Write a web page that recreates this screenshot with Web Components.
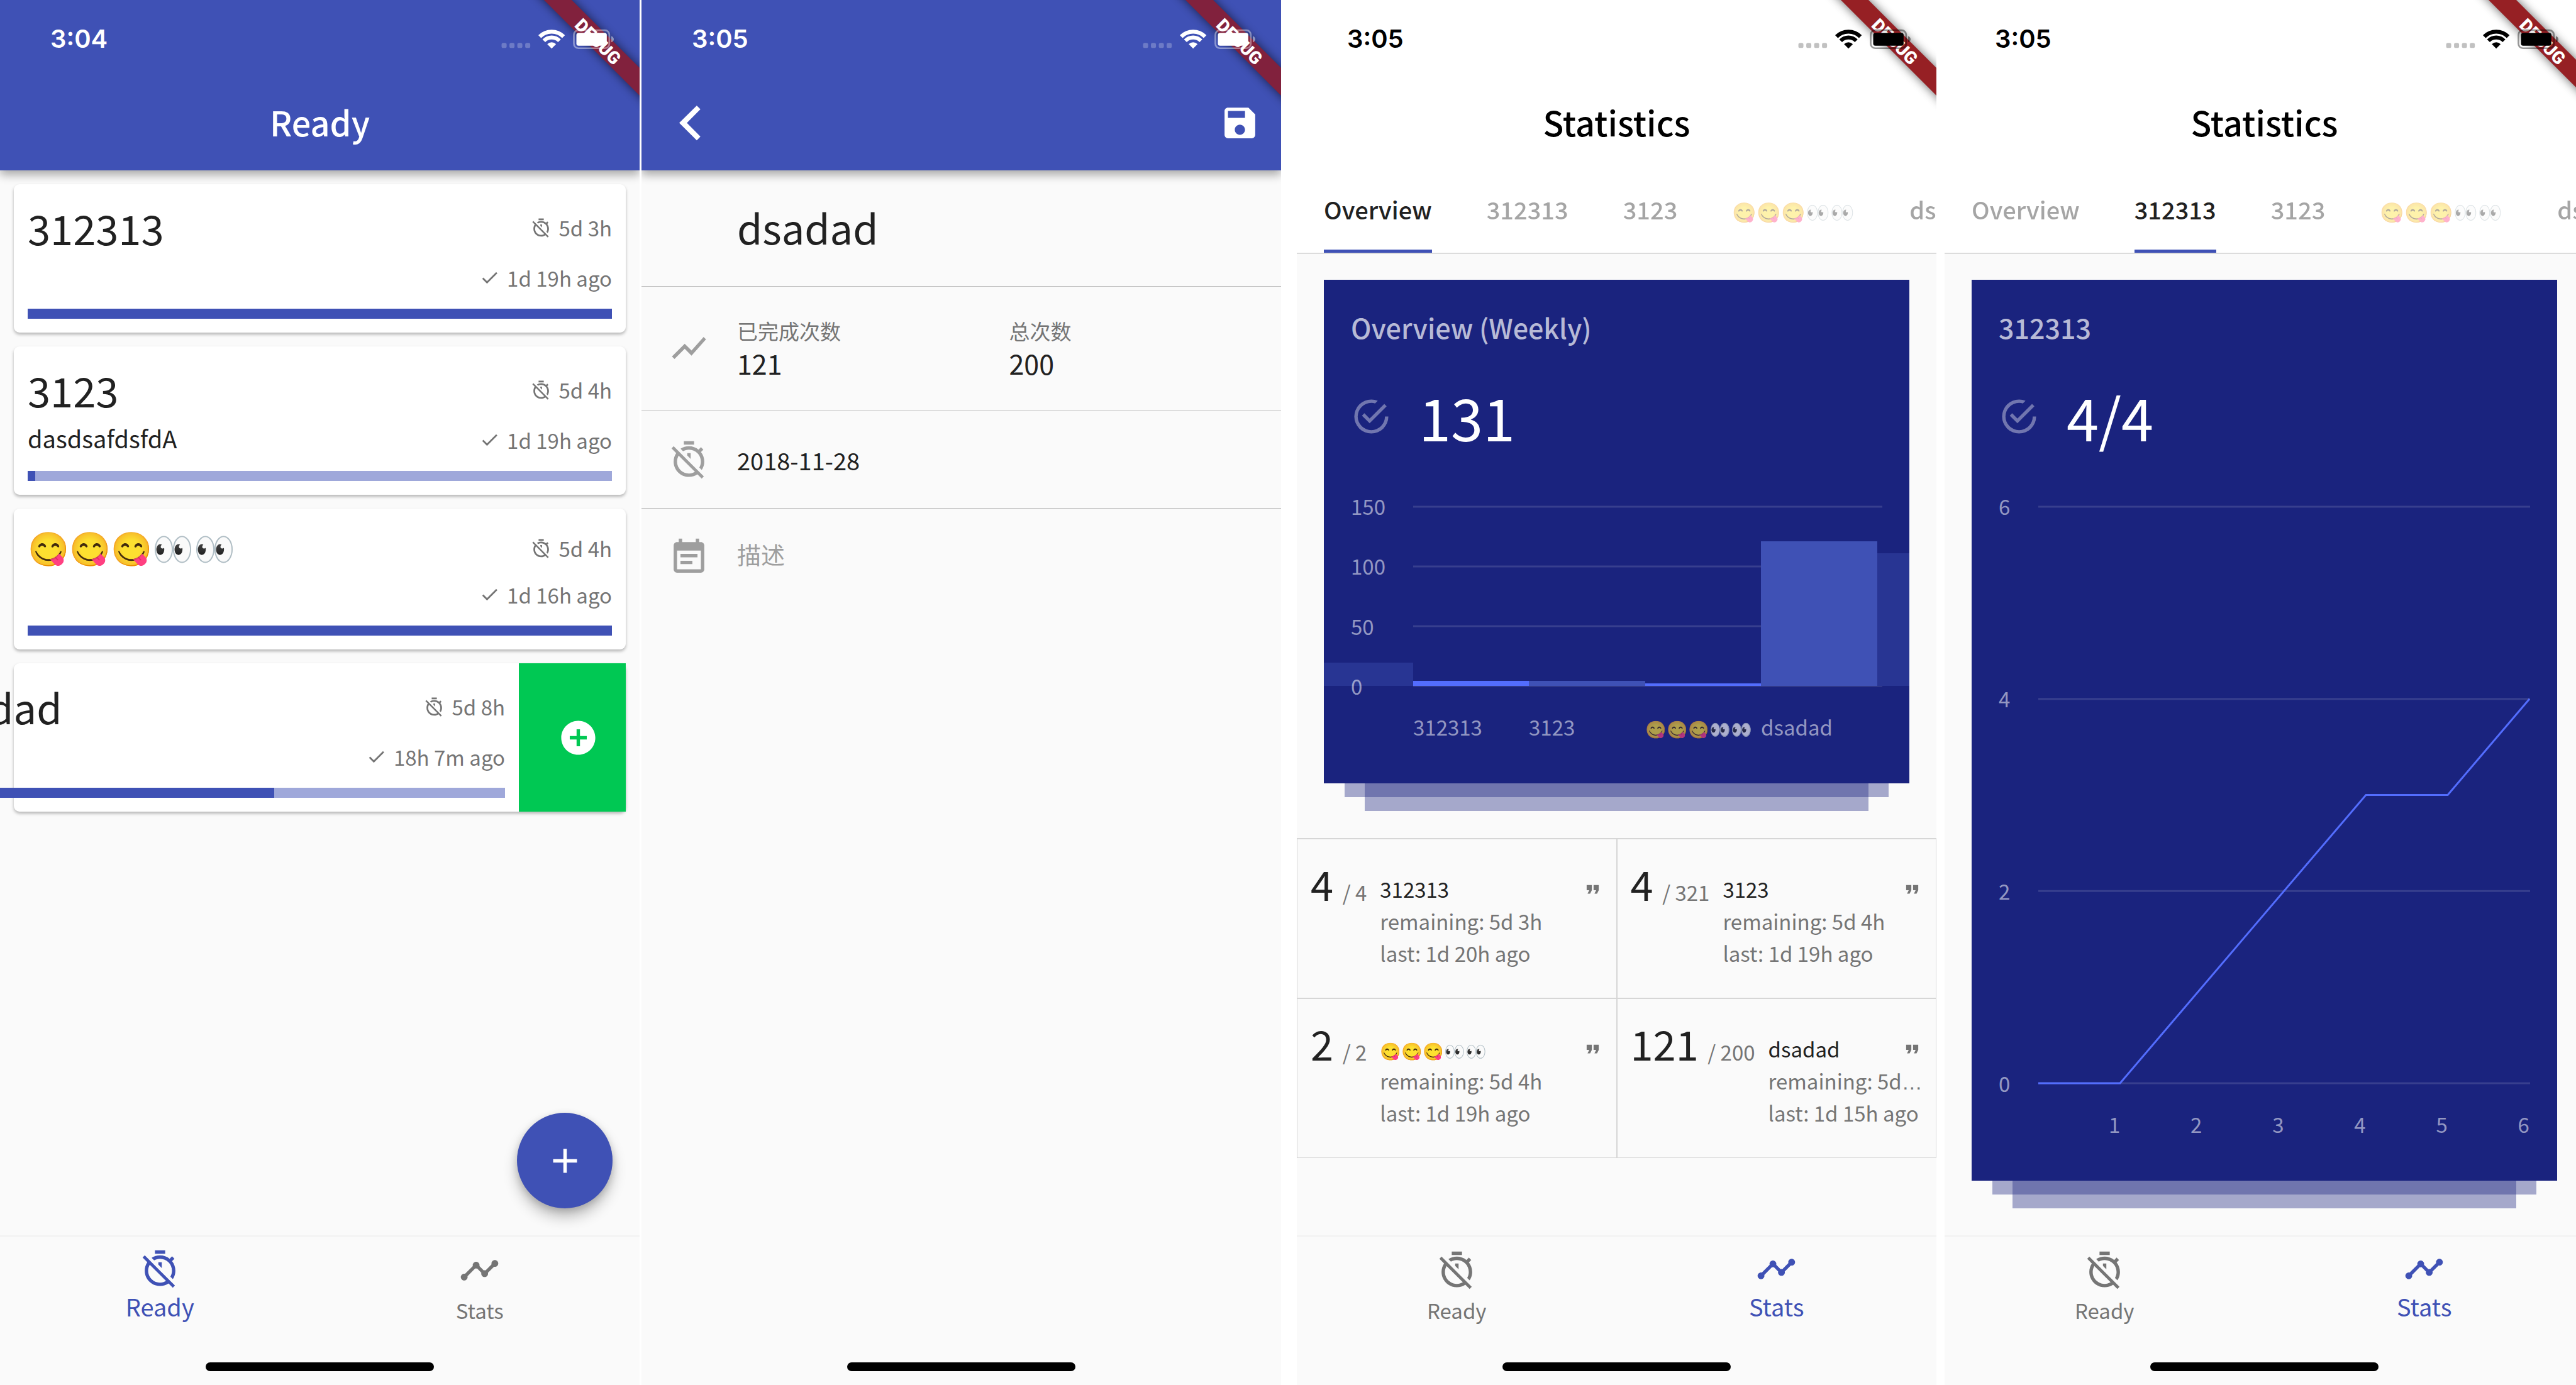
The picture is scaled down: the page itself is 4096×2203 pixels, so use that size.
<!DOCTYPE html>
<html lang="en">
<head>
<meta charset="utf-8">
<title>Counters</title>
<style>
  html, body { margin: 0; height: 100%; }
  body { background: #fff; font-family: "Noto Sans CJK SC", "Noto Sans", sans-serif; color: #212121; }
  screen-board { min-height: 100vh; }
</style>
</head>
<body>
<screen-board>
  <phone-screen>
    <app-bar slot="bar" time="3:04" tone="primary"><h1>Ready</h1></app-bar>
    <counter-list>
      <counter-card left="5d 3h" done="1d 19h ago" value="100">312313</counter-card>
      <counter-card left="5d 4h" done="1d 19h ago" value="1.3" note="dasdsafdsfdA">3123</counter-card>
      <counter-card left="5d 4h" done="1d 16h ago" value="100" short><emoji-run size="53">😋😋😋👀👀</emoji-run></counter-card>
      <counter-card left="5d 8h" done="18h 7m ago" value="60.5" swiped>dsadad</counter-card>
    </counter-list>
    <fab-button></fab-button>
    <bottom-nav slot="nav" active="ready"></bottom-nav>
    <home-indicator slot="home"></home-indicator>
  </phone-screen>

  <phone-screen>
    <app-bar slot="bar" time="3:05" tone="primary" actions></app-bar>
    <counter-form></counter-form>
    <home-indicator slot="home"></home-indicator>
  </phone-screen>

  <phone-screen>
    <app-bar slot="bar" time="3:05" tone="plain"><h1>Statistics</h1></app-bar>
    <tab-strip slot="bar" active="0"></tab-strip>
    <chart-card heading="Overview (Weekly)" total="131" kind="bars"></chart-card>
    <stat-grid>
      <stat-cell count="4" of="4" remaining="5d 3h" last="1d 20h ago">312313</stat-cell>
      <stat-cell count="4" of="321" remaining="5d 4h" last="1d 19h ago">3123</stat-cell>
      <stat-cell count="2" of="2" remaining="5d 4h" last="1d 19h ago"><emoji-run size="27">😋😋😋👀👀</emoji-run></stat-cell>
      <stat-cell count="121" of="200" remaining="5d" last="1d 15h ago" cut>dsadad</stat-cell>
    </stat-grid>
    <bottom-nav slot="nav" active="stats"></bottom-nav>
    <home-indicator slot="home"></home-indicator>
  </phone-screen>

  <phone-screen>
    <app-bar slot="bar" time="3:05" tone="plain"><h1>Statistics</h1></app-bar>
    <tab-strip slot="bar" active="1"></tab-strip>
    <chart-card heading="312313" total="4/4" kind="line"></chart-card>
    <bottom-nav slot="nav" active="stats"></bottom-nav>
    <home-indicator slot="home"></home-indicator>
  </phone-screen>
</screen-board>

<script>
const RESET = `
  *, *::before, *::after { box-sizing: border-box; }
  :host { box-sizing: border-box; display: block; }
  button, input, textarea { font: inherit; color: inherit; background: none; border: 0; padding: 0; margin: 0; outline: 0; min-width: 0; }
  input::placeholder, textarea::placeholder { color: #9e9e9e; opacity: 1; }
  a { color: inherit; text-decoration: none; }
  svg { display: block; }
`;
const define = (name, view) => customElements.define(name, class extends HTMLElement {
  connectedCallback() {
    if (this.shadowRoot) return;
    const t = document.createElement('template');
    const { css, html } = view(this);
    t.innerHTML = `<style>${RESET}${css}</style>${html}`;
    this.attachShadow({ mode: 'open' }).append(t.content.cloneNode(true));
  }
});

const ICONS = {
  timerOff: 'M19.04 4.55l-1.42 1.42C16.07 4.74 14.12 4 12 4c-1.83 0-3.53.55-4.95 1.48l1.46 1.46C9.53 6.35 10.73 6 12 6c3.87 0 7 3.13 7 7 0 1.27-.35 2.47-.94 3.49l1.45 1.45C20.45 16.53 21 14.83 21 13c0-2.12-.74-4.07-1.97-5.61l1.42-1.42-1.41-1.42zM15 1H9v2h6V1zm-4 8.44l2 2V8h-2v1.44zM3.02 4L1.75 5.27 4.5 8.03C3.55 9.45 3 11.16 3 13c0 4.97 4.02 9 9 9 1.84 0 3.55-.55 4.98-1.5l2.5 2.5 1.27-1.27-7.71-7.71L3.02 4zM12 20c-3.87 0-7-3.13-7-7 0-1.28.35-2.48.95-3.52l9.56 9.56c-1.03.61-2.23.96-3.51.96z',
  check: 'M9 16.17L4.83 12l-1.42 1.41L9 19 21 7l-1.41-1.41z',
  add: 'M19 13h-6v6h-2v-6H5v-2h6V5h2v6h6v2z',
  addCircle: 'M12 2C6.48 2 2 6.48 2 12s4.48 10 10 10 10-4.48 10-10S17.52 2 12 2zm5 11h-4v4h-2v-4H7v-2h4V7h2v4h4v2z',
  timeline: 'M23 8c0 1.1-.9 2-2 2-.18 0-.35-.02-.51-.07l-3.56 3.55c.05.16.07.34.07.52 0 1.1-.9 2-2 2s-2-.9-2-2c0-.18.02-.36.07-.52l-2.55-2.55c-.16.05-.34.07-.52.07s-.36-.02-.52-.07l-4.55 4.56c.05.16.07.33.07.51 0 1.1-.9 2-2 2s-2-.9-2-2 .9-2 2-2c.18 0 .35.02.51.07l4.56-4.55C8.02 9.36 8 9.18 8 9c0-1.1.9-2 2-2s2 .9 2 2c0 .18-.02.36-.07.52l2.55 2.55c.16-.05.34-.07.52-.07s.36.02.52.07l3.55-3.56C19.02 8.35 19 8.18 19 8c0-1.1.9-2 2-2s2 .9 2 2z',
  back: 'M10.3 1.8L12.45 4 4.5 12l7.95 8-2.15 2.2L0 12z',
  save: 'M17 3H5c-1.11 0-2 .9-2 2v14c0 1.1.89 2 2 2h14c1.1 0 2-.9 2-2V7l-4-4zm-5 16c-1.66 0-3-1.34-3-3s1.34-3 3-3 3 1.34 3 3-1.34 3-3 3zm3-10H5V5h10v4z',
  showChart: 'M3.5 18.49l6-6.01 4 4L22 6.92l-1.41-1.41-7.09 7.97-4-4L2 16.99z',
  eventNote: 'M17 10H7v2h10v-2zm2-7h-1V1h-2v2H8V1H6v2H5c-1.11 0-1.99.9-1.99 2L3 19c0 1.1.89 2 2 2h14c1.1 0 2-.9 2-2V5c0-1.1-.9-2-2-2zm0 16H5V8h14v11zm-5-5H7v2h7v-2z',
  checkRing: 'M20,12A8,8 0 0,1 12,20A8,8 0 0,1 4,12A8,8 0 0,1 12,4C12.76,4 13.5,4.11 14.2,4.31L15.77,2.74C14.61,2.26 13.34,2 12,2A10,10 0 0,0 2,12A10,10 0 0,0 12,22A10,10 0 0,0 22,12M7.91,10.08L6.5,11.5L11,16L21,6L19.59,4.58L11,13.17L7.91,10.08Z',
  quote: 'M6 17h3l2-4V7H5v6h3zm8 0h3l2-4V7h-6v6h3z'
};
define('md-icon', el => ({
  css: `:host { flex: none; width: 65px; height: 65px; } :host([small]) { width: 33px; height: 33px; } svg { width: 100%; height: 100%; fill: currentColor; }`,
  html: `<svg viewBox="0 0 24 24" aria-hidden="true"><path d="${ICONS[el.getAttribute('name')]}"/></svg>`
}));

define('emoji-run', el => ({
  css: `:host { display: inline-block; font-size: ${el.getAttribute('size')}px; line-height: 1; padding-bottom: 6px; vertical-align: middle; white-space: nowrap; }`,
  html: `<slot></slot>`
}));

define('screen-board', () => ({
  css: `:host { display: grid; grid-template-columns: 1017fr 3px 1017fr 25px 1017fr 13px 1004fr; overflow: hidden; }
    ::slotted(:nth-child(1)) { grid-column: 1; } ::slotted(:nth-child(2)) { grid-column: 3; }
    ::slotted(:nth-child(3)) { grid-column: 5; } ::slotted(:nth-child(4)) { grid-column: 7; margin-right: -13px; }`,
  html: `<slot></slot>`
}));

define('phone-screen', () => ({
  css: `:host { display: flex; flex-direction: column; position: relative; background: #fafafa; overflow: hidden; min-width: 0; }
    .bars { position: relative; z-index: 2; }
    main { flex: 1; display: flex; flex-direction: column; position: relative; min-width: 0; }
    footer { min-height: 36px; }`,
  html: `<div class="bars"><slot name="bar"></slot></div><main><slot></slot></main><slot name="nav"></slot><footer><slot name="home"></slot></footer>`
}));

define('home-indicator', () => ({
  css: `:host { width: 363px; height: 14px; border-radius: 7px; background: #000; margin: 0 auto 22px; }`,
  html: ``
}));

define('status-bar', el => ({
  css: `:host { display: flex; align-items: center; justify-content: space-between; height: 119px; padding: 4px 38px 0 80px; position: relative; }
    time { font: 600 40px/50px Inter, sans-serif; }
    .signs { width: 184px; height: 34px; position: relative; }
    .ribbon { position: absolute; top: 0; right: 0; width: 190px; height: 190px; }
    .ribbon text { font: 900 28px Roboto, sans-serif; fill: #fff; }`,
  html: `<time>${el.getAttribute('time')}</time>
    <svg class="ribbon" viewBox="0 0 190 190"><defs><filter id="b" x="-20%" y="-20%" width="140%" height="140%"><feGaussianBlur stdDeviation="8"/></filter></defs>
      <path d="M18 -20 L62 -20 L210 128 L210 172 Z" fill="#000" opacity=".6" filter="url(#b)"/>
      <path d="M38 0H82L190 108V152Z" fill="var(--ribbon)"/>
      <text transform="translate(124 66) rotate(45)" text-anchor="middle" y="10">DEBUG</text></svg>
    <svg class="signs" viewBox="880 50 204 38" fill="currentColor">
      <g opacity=".24"><rect x="882" y="76" width="9" height="9" rx="3"/><rect x="896" y="76" width="9" height="9" rx="3"/><rect x="910" y="76" width="9" height="9" rx="3"/><rect x="924" y="76" width="9" height="9" rx="3"/></g>
      <g fill="none" stroke="currentColor" stroke-width="7"><path d="M949.8 64.8A30 30 0 0 1 992.2 64.8"/><path d="M957.2 72.2A19.500 19.500 0 0 1 984.800 72.2"/></g>
      <path d="M971 86L963.2 78.200A11 11 0 0 1 978.800 78.200Z"/>
      <rect x="1010.500" y="53.500" width="63" height="32" rx="8" fill="none" stroke="currentColor" stroke-width="3" opacity=".4"/>
      <path d="M1077 64C1083 66 1083 73 1077 75Z" opacity=".45"/>
      <rect x="1015" y="58" width="54" height="23" rx="4"/></svg>`
}));

define('app-bar', el => {
  const primary = el.getAttribute('tone') === 'primary';
  return {
    css: `:host { height: 271px; position: relative; ${primary
        ? 'background: #3f51b5; color: #fff; --ribbon: #81213d; box-shadow: 0 7px 14px rgba(0,0,0,.33);'
        : 'background: #fff; color: #000; --ribbon: #962024;'} }
      .bar { height: 149px; display: flex; align-items: center; justify-content: center; }
      .bar.split { height: 152px; justify-content: space-between; padding: 0 33px 0 60px; }
      ::slotted(h1) { margin: 0; font-size: 54px; font-weight: 500; line-height: 78px; }`,
    html: `<status-bar time="${el.getAttribute('time')}"></status-bar>` + (el.hasAttribute('actions')
      ? `<div class="bar split"><button aria-label="Back"><md-icon name="back"></md-icon></button><button aria-label="Save"><md-icon name="save"></md-icon></button></div>`
      : `<div class="bar"><slot></slot></div>`)
  };
});

define('counter-list', () => ({
  css: `:host { display: flex; flex-direction: column; gap: 22px; padding: 22px 22px 0; }`,
  html: `<slot></slot>`
}));

define('counter-card', el => {
  const a = n => el.getAttribute(n) || '';
  const swiped = el.hasAttribute('swiped');
  return {
    css: `:host { display: flex; background: #fff; border-radius: 9px; box-shadow: 0 3px 5px rgba(0,0,0,.28); }
      .body { flex: 0 0 100%; margin-left: ${swiped ? '-170px' : '0'}; padding: 22px; }
      .row { display: flex; justify-content: space-between; align-items: center; height: 65px; }
      .row.top { height: ${el.hasAttribute('short') ? 82 : 94}px; }
      h2 { margin: 0; font-size: 65px; line-height: 94px; font-weight: 400; }
      :host([short]) h2 { line-height: 62px; align-self: flex-start; }
      p { margin: 0; font-size: 38px; line-height: 59px; align-self: flex-start; }
      .meta { display: flex; align-items: center; gap: 11px; font-size: 33px; line-height: 48px; color: #757575; margin-left: auto; }
      .track { height: 16px; margin-top: 17px; background: #9fa8da; }
      .fill { height: 100%; width: ${a('value')}%; background: #3f51b5; }
      button { flex: 1; background: #00c853; color: #fff; display: flex; align-items: center; justify-content: flex-end; padding-right: 43px; }`,
    html: `<div class="body"><div class="row top"><h2><slot></slot></h2><div class="meta"><md-icon small name="timerOff"></md-icon>${a('left')}</div></div>
      <div class="row">${a('note') && `<p>${a('note')}</p>`}<div class="meta"><md-icon small name="check"></md-icon>${a('done')}</div></div>
      <div class="track"><div class="fill"></div></div></div>${swiped ? `<button aria-label="Add one"><md-icon name="addCircle"></md-icon></button>` : ''}`
  };
});

define('fab-button', () => ({
  css: `:host { position: absolute; right: 43px; bottom: 43px; }
    button { display: flex; align-items: center; justify-content: center; width: 152px; height: 152px; border-radius: 50%; background: #3f51b5; color: #fff; box-shadow: 0 14px 22px rgba(0,0,0,.24), 0 4px 12px rgba(0,0,0,.16); }`,
  html: `<button aria-label="New counter"><md-icon name="add"></md-icon></button>`
}));

define('bottom-nav', el => {
  const item = (id, icon, label) => `<a href="#${id}" class="${el.getAttribute('active') === id ? 'on' : ''}"><md-icon name="${icon}"></md-icon><span>${label}</span></a>`;
  return {
    css: `:host { height: 202px; border-top: 2px solid #f1f1f1; }
      nav { display: flex; }
      a { flex: 1; display: flex; flex-direction: column; align-items: center; padding-top: 21px; color: #757575; font-size: 33px; line-height: 62px; }
      a.on { padding-top: 19px; color: #3f51b5; font-size: 38px; line-height: 53px; }`,
    html: `<nav>${item('ready', 'timerOff', 'Ready')}${item('stats', 'timeline', 'Stats')}</nav>`
  };
});

define('counter-form', () => ({
  css: `.row { display: flex; align-items: center; padding: 45px 0 44px 43px; border-bottom: 1px solid #b9b9b9; font-size: 38px; }
    .row:last-child { border: 0; align-items: flex-start; }
    md-icon { color: #9e9e9e; margin-right: 44px; }
    input { width: 100%; height: 60px; }
    textarea { display: block; flex: 1; height: 54px; line-height: 54px; resize: none; overflow: hidden; }
    .name { padding: 43px 0 47px 152px; }
    .name input { font-size: 65px; height: 94px; }
    .counts { padding: 46px 0 49px 43px; }
    label { flex: 1; display: block; font-size: 33px; line-height: 48px; color: #757575; }
    label input { display: block; font-size: 43px; height: 54px; color: #212121; }`,
  html: `<form><div class="row name"><input aria-label="Name" value="dsadad"></div>
    <div class="row counts"><md-icon name="showChart"></md-icon><label>已完成次数<input value="121"></label><label>总次数<input value="200"></label></div>
    <div class="row"><md-icon name="timerOff"></md-icon><input aria-label="Date" value="2018-11-28"></div>
    <div class="row"><md-icon name="eventNote"></md-icon><textarea aria-label="描述" placeholder="描述" rows="1"></textarea></div></form>`
}));

define('tab-strip', el => {
  const tabs = ['Overview', '312313', '3123', '<emoji-run size="31">😋😋😋👀👀</emoji-run>', 'dsadad'];
  return {
    css: `:host { background: #fff; border-bottom: 2px solid #dcdcdc; overflow: hidden; }
      nav { display: flex; gap: 87px; padding-left: 43px; }
      a { flex: none; font-size: 38px; font-weight: 500; line-height: 123px; height: 131px; border-bottom: 5px solid transparent; opacity: .4; white-space: nowrap; }
      a.on { opacity: 1; border-color: #3f51b5; }`,
    html: `<nav>${tabs.map((t, i) => `<a href="#t${i}" class="${+el.getAttribute('active') === i ? 'on' : ''}">${t}</a>`).join('')}</nav>`
  };
});

define('chart-card', el => {
  const bars = el.getAttribute('kind') === 'bars';
  const lines = (x, ys) => ys.map(y => `<path d="M${x} ${y}H888" stroke="rgba(255,255,255,.13)" stroke-width="3" vector-effect="non-scaling-stroke"/>`).join('');
  const drawing = bars
    ? `<svg class="art" viewBox="0 0 931 285" preserveAspectRatio="none">${lines(142, [0, 95, 190, 285])}
        <path d="M0 248H142V285H0Z M880 74H931V285H880Z" fill="#283593"/>
        <path d="M142 277H326V285H142Z M511 281H695V285H511Z" fill="#536dfe"/>
        <path d="M326 277H511V285H326Z M695 55H880V285H695Z" fill="#3f51b5"/></svg>`
    : `<svg class="art" viewBox="0 0 931 918" preserveAspectRatio="none">${lines(106, [0, 306, 612, 918])}
        <path d="M106 918H236L627 459H757L887 306" fill="none" stroke="#536dfe" stroke-width="3" vector-effect="non-scaling-stroke"/></svg>`;
  const ys = bars ? ['150', '100', '50', '0'] : ['6', '4', '2', '0'];
  const xs = bars ? ['312313', '3123', '<emoji-run size="27">😋😋😋👀👀</emoji-run>', 'dsadad'] : ['1', '2', '3', '4', '5', '6'];
  return {
    css: `:host { display: flex; flex-direction: column; margin: 41px 43px 0; ${bars ? '' : 'flex: 1; padding-bottom: 43px;'} }
      .card { background: #1a237e; color: rgba(255,255,255,.54); font-size: 33px; line-height: 48px; padding: 43px 0 66px; flex: 1; display: flex; flex-direction: column; }
      h2 { margin: 0 43px; font-size: 43px; line-height: 65px; font-weight: 500; color: rgba(255,255,255,.7); }
      .total { display: flex; align-items: center; gap: 43px; margin: 43px 43px 0; font-size: 92px; line-height: 132px; color: #fff; }
      .total md-icon { color: rgba(255,255,255,.38); }
      .plot { display: grid; margin-top: 78px; flex: 1; min-height: 285px; }
      .plot > * { grid-area: 1 / 1; }
      .art { width: 100%; height: 100%; overflow: visible; contain: size; }
      .y { display: flex; flex-direction: column; justify-content: space-between; margin: -25px 0 -24px 43px; z-index: 1; }
      .x { display: grid; margin-top: 41px; grid-template-columns: ${bars ? '142fr 184fr 185fr 184fr 185fr 51fr' : '106fr repeat(6, 130fr) 44fr'}; text-align: ${bars ? 'left' : 'right'}; }
      .x span { min-width: 0; white-space: nowrap; height: 48px; }
      .x span:first-child { grid-column: 2; }
      emoji-run { color: #fff; opacity: .65; }
      .stack { height: 44px; display: grid; }
      .stack i { grid-area: 1 / 1; background: rgba(26,35,126,.38); }
      .stack i:first-child { height: 22px; margin: 0 33px; }
      .stack i:last-child { margin: 0 65px; }`,
    html: `<div class="card"><h2>${el.getAttribute('heading')}</h2>
      <div class="total"><md-icon name="checkRing"></md-icon><span>${el.getAttribute('total')}</span></div>
      <div class="plot">${drawing}<div class="y">${ys.map(t => `<span>${t}</span>`).join('')}</div></div>
      <div class="x">${xs.map(t => `<span>${t}</span>`).join('')}</div></div>
      <div class="stack"><i></i><i></i></div>`
  };
});

define('stat-grid', () => ({
  css: `:host { display: grid; grid-template-columns: 1fr 1fr; grid-auto-rows: 254px; margin-top: 43px; border-top: 1px solid #d6d6d6; }`,
  html: `<slot></slot>`
}));

define('stat-cell', el => {
  const a = n => el.getAttribute(n);
  return {
    css: `:host { display: flex; gap: 21px; border: 1px solid #d6d6d6; padding: 23px 21px 0; font-size: 33px; line-height: 51px; color: #757575; min-width: 0; }
      .count { flex: none; font-size: 65px; line-height: 94px; color: #212121; white-space: pre; }
      .count small { font-size: 33px; color: #757575; }
      .info { flex: 1; min-width: 0; padding-top: 31px; white-space: nowrap; }
      .head { display: flex; align-items: center; justify-content: space-between; }
      h3 { margin: 0; font-size: 33px; font-weight: 400; color: #212121; }
      .info div { height: 51px; }
      .dots { font-family: "Liberation Sans", sans-serif; }`,
    html: `<div class="count">${a('count')} <small>/ ${a('of')}</small></div>
      <div class="info"><div class="head"><h3><slot></slot></h3><md-icon small name="quote"></md-icon></div>
      <div>remaining: ${a('remaining')}${el.hasAttribute('cut') ? '<span class="dots">…</span>' : ''}</div><div>last: ${a('last')}</div></div>`
  };
});
</script>
</body>
</html>
